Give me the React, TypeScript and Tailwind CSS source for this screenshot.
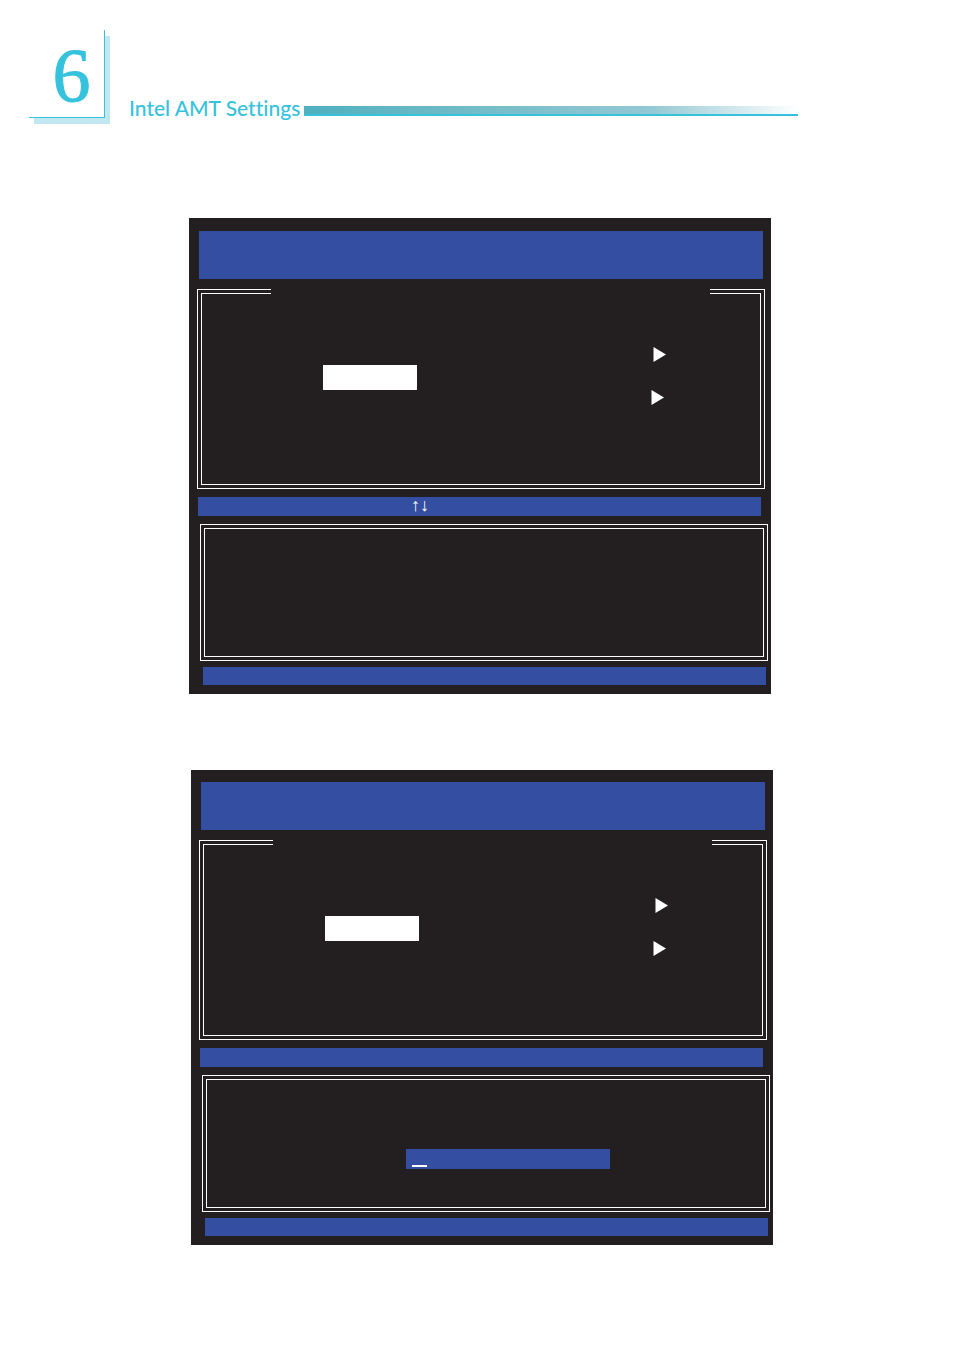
import type { ReactNode } from "react";

type ScreenProps = {
  className: string;
  keys?: string;
  children?: ReactNode;
};

const Arrow = ({ className }: { className: string }) => (
  <svg
    viewBox="0 0 13 15"
    className={`h-[15px] w-[13px] fill-white ${className}`}
    aria-hidden="true"
  >
    <path d="M0.5 0L13 7.5L0.5 15Z" />
  </svg>
);

const Screen = ({ className, keys, children }: ScreenProps) => {
  return (
    <section className={`bg-[#231f20] pb-[9px] ${className}`}>
      <div className="mr-2 ml-[10px] h-12 bg-[#344ea1]" />

      {/* main menu, the double frame is open at the top for the title */}
      <div className="relative mt-[10px] mr-[6px] ml-2 border border-white p-[3px]">
        <div className="absolute -top-px right-[54px] left-[73px] h-[6px] bg-[#231f20]" />
        <div className="flex h-48 items-start justify-between border border-white pr-[94px] pl-[121px]">
          <div className="mt-[71px] h-[25px] w-[94px] bg-white" />
          <div className="mt-[53px] flex flex-col items-end gap-7">
            <Arrow className="" />
            <Arrow className="mr-[2px]" />
          </div>
        </div>
      </div>

      <div className="mt-2 mr-[10px] ml-[9px] h-[19px] bg-[#344ea1] pl-[213px] font-['Liberation_Serif',serif] text-lg leading-[17px] text-white">
        {keys}
      </div>

      <div className="mt-2 mr-[3px] ml-[11px] border border-white p-[3px]">
        <div className="h-[129px] border border-white">{children}</div>
      </div>

      <div className="mt-[6px] mr-[5px] ml-[14px] h-[18px] bg-[#344ea1]" />
    </section>
  );
};

const App = () => {
  return (
    <div className="min-h-screen bg-white pt-[30px] pb-[105px]">
      <header className="flex items-end pr-[156px] pl-[29px] text-[#36c2dd]">
        <div className="flex h-[88px] w-[76px] shrink-0 items-center justify-center border-r border-b border-[#36c2dd] bg-white pt-[2px] pl-[10px] font-['Liberation_Serif',serif] text-[76px] leading-none shadow-[5px_6px_0_#c1e7f0] [-webkit-text-stroke:1px_#36c2dd]">
          6
        </div>
        <h1 className="ml-6 shrink-0 font-['Lato',sans-serif] text-[21px] leading-5 font-medium [font-variant-ligatures:none]">
          Intel AMT Settings
        </h1>
        <div className="mb-[2px] ml-1 h-[10px] grow border-b-2 border-[#36c2dd] bg-linear-to-r from-[#4fb0be] via-[#93c8d4] via-70% to-white" />
      </header>

      <main>
        <Screen className="mt-[100px] mr-[183px] ml-[189px] pt-[13px]" keys="↑↓" />
        <Screen className="mt-[76px] mr-[181px] ml-[191px] pt-3">
          <div className="relative mt-[69px] ml-[199px] h-5 w-[204px]">
            <input
              type="text"
              aria-label="Password"
              className="block h-5 w-full bg-[#344ea1] px-[6px] text-white outline-none"
            />
            <span className="absolute bottom-[2px] left-[6px] h-[2px] w-[15px] bg-white" />
          </div>
        </Screen>
      </main>
    </div>
  );
};

export default App;
